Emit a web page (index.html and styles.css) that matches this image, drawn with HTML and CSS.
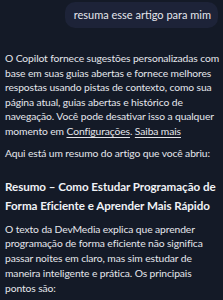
FILE: index.html
```html
<!DOCTYPE html>
<html lang="pt">
<head>
<meta charset="utf-8">
<link rel="stylesheet" href="styles.css">
</head>
<body>
<div class="chat">
  <div class="user-row">
    <div class="bubble">resuma esse artigo para mim</div>
  </div>
  <div class="answer">
    <p>O Copilot fornece sugestões personalizadas com<br>base em suas guias abertas e fornece melhores<br>respostas usando pistas de contexto, como sua<br>página atual, guias abertas e histórico de<br>navegação. Você pode desativar isso a qualquer<br>momento em <a href="#">Configurações</a>. <a href="#">Saiba mais</a></p>
    <p>Aqui está um resumo do artigo que você abriu:</p>
    <h3>Resumo – Como Estudar Programação de<br>Forma Eficiente e Aprender Mais Rápido</h3>
    <p class="tall">O texto da DevMedia explica que aprender<br>programação de forma eficiente não significa<br>passar noites em claro, mas sim estudar de<br>maneira inteligente e prática. Os principais<br>pontos são:</p>
  </div>
</div>
</body>
</html>
```
FILE: styles.css
```css
html, body {
  margin: 0;
  padding: 0;
  background: #141a27;
  overflow: hidden;
}
body {
  width: 223px;
  height: 300px;
  font-family: Lato, "Noto Sans", sans-serif;
  color: #e4e6ec;
}
.chat {
  padding: 2px 0 0 5px;
}
.user-row {
  display: flex;
  justify-content: flex-end;
  padding-right: 5px;
}
.bubble {
  background: #1d2338;
  border-radius: 10px;
  padding: 5px 7px 6px 9px;
  font-size: 11px;
  line-height: 15px;
}
.answer {
  margin-top: 23px;
  font-size: 10.3px;
  line-height: 14.5px;
  letter-spacing: -0.1px;
}
.answer p {
  margin: 0 0 7.5px 0;
  white-space: nowrap;
}
.answer p.tall {
  line-height: 14.8px;
}
.answer a {
  color: #e4e6ec;
  text-decoration: underline;
  text-underline-offset: 1.5px;
}
.answer h3 {
  margin: 16.5px 0 7px 0;
  font-size: 11.6px;
  line-height: 19px;
  font-weight: 700;
  letter-spacing: -0.05px;
  white-space: nowrap;
  color: #f0f2f6;
}
```
